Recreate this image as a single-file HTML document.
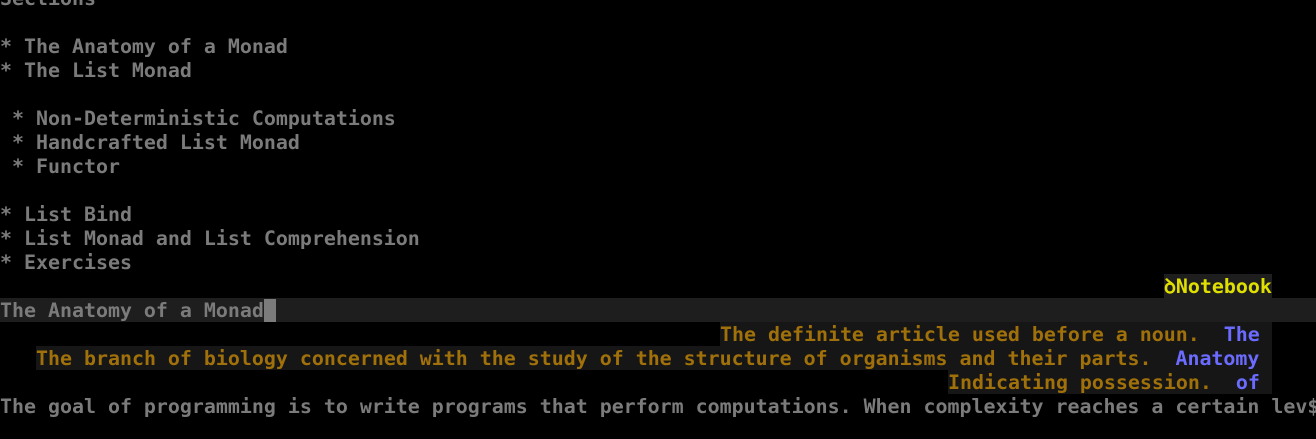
<!DOCTYPE html><html><head><meta charset="utf-8"><style>
body{margin:0;width:1316px;height:439px;background:#000;overflow:hidden;position:relative;font-family:"DejaVu Sans Mono","Liberation Mono",monospace;font-weight:bold;font-size:19.93px;color:#7b7b7b}
.r{position:absolute;height:24px;line-height:26px;white-space:pre;left:0}
.o{color:#a0700a}.b{color:#6b6bff}
.bg{background:#161616}
</style></head><body>
<div class="r" style="top:-14px">Sections</div>
<div class="r" style="top:34px">* The Anatomy of a Monad</div>
<div class="r" style="top:58px">* The List Monad</div>
<div class="r" style="top:106px"> * Non-Deterministic Computations</div>
<div class="r" style="top:130px"> * Handcrafted List Monad</div>
<div class="r" style="top:154px"> * Functor</div>
<div class="r" style="top:202px">* List Bind</div>
<div class="r" style="top:226px">* List Monad and List Comprehension</div>
<div class="r" style="top:250px">* Exercises</div>
<div class="r" style="top:274px;left:1164px;width:108px;background:#1e1e1e;color:#e0e000">ꝺNotebook</div>
<div class="r" style="top:298px;width:1316px;background:#1e1e1e">The Anatomy of a Monad<span style="background:#7b7b7b"> </span></div>
<div class="r bg" style="top:322px;left:720px;width:552px"><span class="o">The definite article used before a noun.</span>  <span class="b">The</span></div>
<div class="r bg" style="top:346px;left:36px;width:1236px"><span class="o">The branch of biology concerned with the study of the structure of organisms and their parts.</span>  <span class="b">Anatomy</span></div>
<div class="r bg" style="top:370px;left:948px;width:324px"><span class="o">Indicating possession.</span>  <span class="b">of</span></div>
<div class="r" style="top:394px">The goal of programming is to write programs that perform computations. When complexity reaches a certain lev$</div>
</body></html>
